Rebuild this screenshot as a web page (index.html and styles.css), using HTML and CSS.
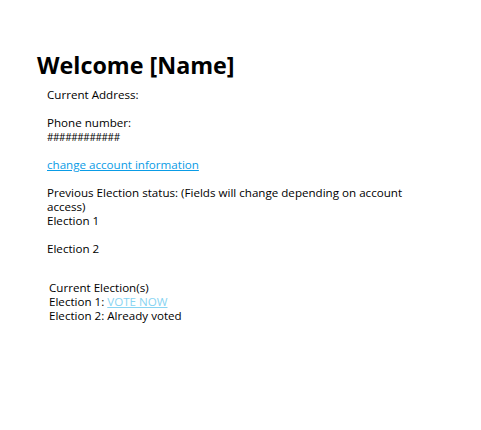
FILE: index.html
```html
<!DOCTYPE html>
<html>
<head>
<meta charset="utf-8">
<link rel="stylesheet" href="styles.css">
</head>
<body>
<div class="page">
  <h1 class="title">Welcome [Name]</h1>
  <div class="info">
    <p>Current Address:</p>
    <p class="gap">Phone number:<br><span class="hashes">############</span></p>
    <p class="gap"><a class="link" href="#">change account information</a></p>
    <p class="gap">Previous Election status: (Fields will change depending on account access)<br>Election 1</p>
    <p class="gap">Election 2</p>
  </div>
  <div class="current">
    <p>Current Election(s)<br>Election 1: <a class="vote" href="#">VOTE NOW</a><br>Election 2: Already voted</p>
  </div>
</div>
</body>
</html>
```
FILE: styles.css
```css
html, body {
  margin: 0;
  padding: 0;
  background: #ffffff;
}
body {
  font-family: "Open Sans", sans-serif;
  color: #000;
}
.page {
  padding: 49px 0 0 37px;
}
.title {
  margin: 0;
  font-family: "Open Sans", sans-serif;
  font-weight: 700;
  font-size: 23.3px;
  line-height: 32px;
}
.info {
  margin: 7px 0 0 10px;
  width: 375px;
  font-size: 11.6px;
  line-height: 14px;
}
.info p, .current p {
  margin: 0;
}
.gap {
  margin-top: 14px !important;
}
.hashes {
  font-size: 10px;
  letter-spacing: -0.4px;
}
.link {
  color: #0a9ce6;
  text-decoration: underline;
}
.current {
  margin: 25px 0 0 12px;
  font-size: 11.6px;
  line-height: 14px;
}
.vote {
  color: #88d4f2;
  text-decoration: underline;
}
```
